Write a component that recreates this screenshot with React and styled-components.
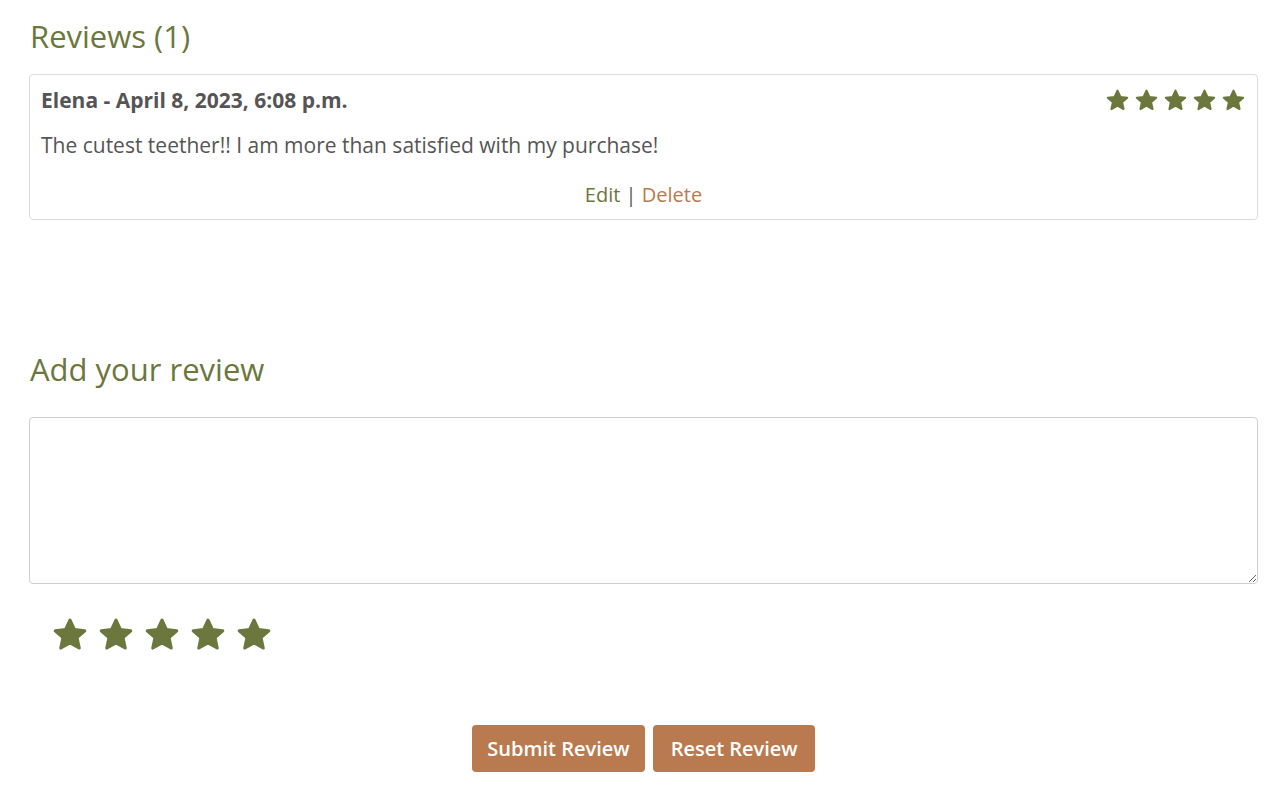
import styled, { createGlobalStyle } from 'styled-components';

const GlobalStyle = createGlobalStyle`
  body {
    margin: 0;
    background: #fff;
    font-family: "Open Sans", "Liberation Sans", sans-serif;
    color: #555;
  }
`

const Page = styled.div`
  padding: 14px 29px 30px 29px;
  display: flex;
  flex-direction: column;
`

const Heading = styled.h2`
  margin: 0 0 ${props => props.mb || '0'} 1px;
  font-size: 31px;
  font-weight: 400;
  color: #6b773d;
  line-height: 44px;
  margin-top: ${props => props.mt || '0'};
`

const Card = styled.div`
  border: 1px solid #dcdcdc;
  border-radius: 4px;
  padding: 10px 11px 10px 11px;
  display: flex;
  flex-direction: column;
`

const CardHead = styled.div`
  display: flex;
  align-items: center;
  justify-content: space-between;
  height: 30px;
`

const Author = styled.div`
  font-size: 21px;
  font-weight: 700;
  color: #555;
`

const Stars = styled.div`
  display: flex;
  gap: ${props => props.gap};
  padding: ${props => props.pad || '0'};
`

const ReviewText = styled.p`
  margin: 15px 0 0 0;
  font-size: 21px;
  line-height: 30px;
  color: #555;
`

const Actions = styled.div`
  text-align: center;
  font-size: 20px;
  margin-top: 21px;
  line-height: 28px;
  color: #555;
`

const ActionLink = styled.a`
  color: ${props => props.color};
  text-decoration: none;
  cursor: pointer;
`

const TextArea = styled.textarea`
  width: 100%;
  height: 167px;
  box-sizing: border-box;
  border: 1px solid #cfcfcf;
  border-radius: 4px;
  font-family: inherit;
  font-size: 20px;
  padding: 8px 12px;
  outline: none;
`

const ButtonRow = styled.div`
  display: flex;
  justify-content: center;
  gap: 8px;
  margin-top: 71px;
`

const Button = styled.button`
  background-color: #b97a50;
  color: #fff;
  border: none;
  border-radius: 4px;
  height: 47px;
  padding: 0 ${props => props.px};
  font-family: inherit;
  font-size: 20px;
  font-weight: 600;
  cursor: pointer;
`

function Star({ size }) {
  return (
    <svg width={size} height={size} viewBox="0 0 24 24">
      <polygon
        points="12,2.6 14.8,8.6 21.3,9.3 16.4,13.7 17.8,20.2 12,16.9 6.2,20.2 7.6,13.7 2.7,9.3 9.2,8.6"
        fill="#6b773d"
        stroke="#6b773d"
        strokeWidth="2"
        strokeLinejoin="round"
      />
    </svg>
  )
}

function StarRow({ size, gap, pad }) {
  return (
    <Stars gap={gap} pad={pad}>
      {[0, 1, 2, 3, 4].map(i => <Star key={i} size={size} />)}
    </Stars>
  )
}

export default function App() {
  return (
    <>
      <GlobalStyle />
      <Page>
        <Heading mb='16px'>Reviews (1)</Heading>
        <Card>
          <CardHead>
            <Author>Elena - April 8, 2023, 6:08 p.m.</Author>
            <StarRow size='25px' gap='4px' />
          </CardHead>
          <ReviewText>The cutest teether!! I am more than satisfied with my purchase!</ReviewText>
          <Actions>
            <ActionLink color='#6b773d'>Edit</ActionLink> | <ActionLink color='#b97a50'>Delete</ActionLink>
          </Actions>
        </Card>
        <Heading mt='127px' mb='26px'>Add your review</Heading>
        <TextArea />
        <StarRow size='38px' gap='8px' pad='32px 0 0 22px' />
        <ButtonRow>
          <Button px='15.5px'>Submit Review</Button>
          <Button px='17.5px'>Reset Review</Button>
        </ButtonRow>
      </Page>
    </>
  )
}
